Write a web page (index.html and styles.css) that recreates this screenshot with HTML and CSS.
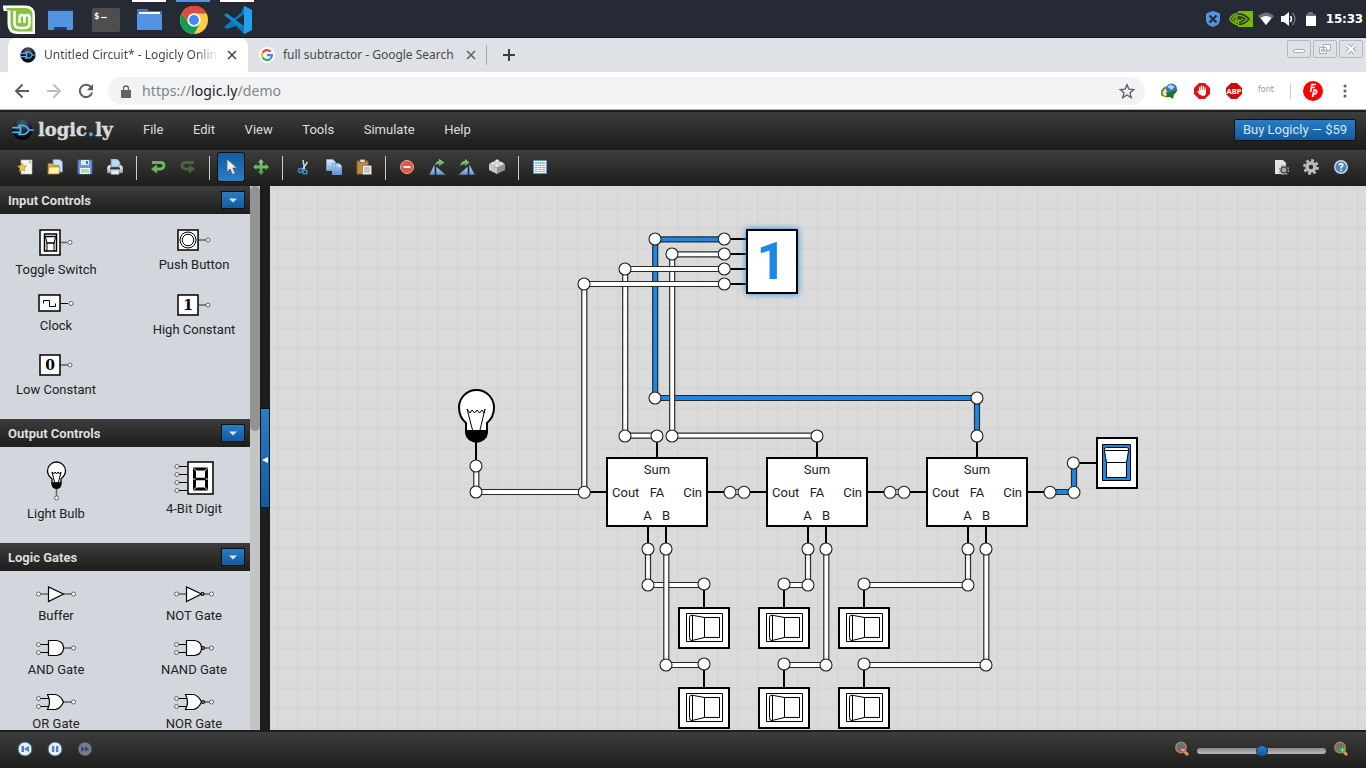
FILE: index.html
```html
<!DOCTYPE html>
<html lang="en">
<head>
<meta charset="utf-8">
<title>Untitled Circuit* - Logicly Online</title>
<link rel="stylesheet" href="styles.css">
</head>
<body>
<svg class="defs" width="0" height="0" aria-hidden="true">
  <defs>
    <linearGradient id="blue" x1="0" y1="0" x2="0" y2="1"><stop offset="0" stop-color="#dcecff"/><stop offset="1" stop-color="#5b8fd6"/></linearGradient>
    <linearGradient id="silver" x1="0" y1="0" x2="0" y2="1"><stop offset="0" stop-color="#f4f4f4"/><stop offset="1" stop-color="#aaa"/></linearGradient>
    <linearGradient id="green" x1="0" y1="0" x2="0" y2="1"><stop offset="0" stop-color="#a8dc98"/><stop offset="1" stop-color="#46943c"/></linearGradient>
    <radialGradient id="orb" cx=".5" cy=".2" r=".8"><stop offset="0" stop-color="#53606b"/><stop offset=".6" stop-color="#11161c"/><stop offset="1" stop-color="#000"/></radialGradient>
    <filter id="glow" x="-30%" y="-30%" width="160%" height="160%"><feGaussianBlur stdDeviation="3"/></filter>
    <symbol id="plug" viewBox="0 0 24 24">
      <circle cx="12" cy="12" r="11.2" fill="url(#orb)" stroke="#33414c" stroke-width=".7"/>
      <g fill="none" stroke="#55b4f5" stroke-width="1.7"><path d="M1.500 9.500h9.500M1.500 14.500h9.500M18 12h5.500M8.500 7.300h4q4.500 .6 6 4.700q-1.500 4.100-6 4.700h-4q3-4.700 0-9.400z"/></g>
    </symbol>
    <symbol id="google" viewBox="0 0 16 16">
      <circle cx="8" cy="8" r="8" fill="#fff"/>
      <g fill="none" stroke-width="2.200"><path d="M11.500 4.600A5 5 0 0 0 3.700 5.600" stroke="#ea4335"/><path d="M3.700 5.600A5 5 0 0 0 3.700 10.500" stroke="#fbbc05"/><path d="M3.700 10.500A5 5 0 0 0 11.300 11.800" stroke="#34a853"/><path d="M11.300 11.800A5 5 0 0 0 13 8.100H8" stroke="#4285f4"/></g>
    </symbol>
    <symbol id="adder" viewBox="0 0 102 70">
      <rect x="1" y="1" width="100" height="68" fill="#fff" stroke="#000" stroke-width="2"/>
      <g class="pin-label"><text x="51" y="17" text-anchor="middle">Sum</text><text x="6" y="40">Cout</text><text x="51" y="40" text-anchor="middle">FA</text><text x="96" y="40" text-anchor="end">Cin</text><text x="41.500" y="63" text-anchor="middle">A</text><text x="60" y="63" text-anchor="middle">B</text></g>
    </symbol>
    <symbol id="switch-off" viewBox="0 0 52 42">
      <rect x="1" y="1" width="50" height="40" fill="#fff" stroke="#000" stroke-width="2"/>
      <g fill="none" stroke="#000"><path d="M8.500 6.500h36v28h-36zM26.500 10.500h15v20h-15zM14.500 8.500v25"/><path d="M26.500 10.500L14 8.200Q11.500 8 11.500 10.500v20Q11.500 34 14 33.500l12.500-3"/></g>
    </symbol>
  </defs>
</svg>

<header class="taskbar">
  <div class="launchers">
    <span class="launcher mint"><svg width="33" height="30" viewBox="0 0 33 30"><path d="M0 .5h22q10 0 10 9.500v19H15Q4.500 29 4.500 19V6H1Q0 5 0 .5z" fill="#fff"/><path d="M3 3h19q7.500 0 7.500 7v16.500H15q-7.500 0-7.500-7.500V5.500H4z" fill="#86c440"/><path d="M11.500 6v12q0 5 5 5h5q5 0 5-5v-5q0-3-2.500-3t-2.500 3v5-5q0-3-2.500-3t-2.500 3v5" fill="none" stroke="#fff" stroke-width="2.500"/></svg></span>
    <span class="launcher"><svg width="26" height="24"><rect y="1" width="25" height="21" rx="1" fill="#5294e2"/><path d="M0 1h25v2H0z" fill="#213a5d"/><path d="M6 22v-2l1-1h11l1 1v2z" fill="#213a5d"/></svg></span>
    <span class="launcher"><svg width="28" height="24"><rect width="28" height="24" rx="1.500" fill="#4e4e4e"/><text x="2" y="10.500" class="prompt">$</text><path d="M9 9.500h6" stroke="#fff" stroke-width="1.200"/></svg></span>
    <span class="launcher open"><svg width="26" height="23"><path d="M0 2q0-1 1-1h9l2 2h12q1 0 1 1v18H0z" fill="#4179bd"/><path d="M2 4h21v3H2z" fill="#fff"/><path d="M0 6h25v15q0 1-1 1H1q-1 0-1-1z" fill="#5294e2"/></svg></span>
    <span class="launcher current"><svg width="28" height="28" viewBox="-14 -14 28 28"><circle r="14" fill="#ffcd40"/><path d="M-12.100-7A14 14 0 0 0 0 14L6 3-6 3z" fill="#109d58"/><path d="M0-6.500H12.600A14 14 0 0 0-12.100-7L-6 3z" fill="#dd4b3e"/><circle r="6.700" fill="#fff"/><circle r="5" fill="#4587f3"/></svg></span>
    <span class="launcher open"><svg width="28" height="28"><path d="M20 0l8 4v20l-8 4-8-8L3 23l-3-2 17-14z" fill="#0879be"/><path d="M2.500 7L0 9l15 12 5-3V20z" fill="#1189d1"/><path d="M20 0l8 4v20l-8 4z" fill="#25a0ec"/><path d="M20 8v12l-8-6z" fill="#252a35"/></svg></span>
  </div>
  <div class="tray">
    <svg width="16" height="18"><path d="M8 1l6 2q1 0 1 2v5q0 5-7 7-7-2-7-7V5q0-2 1-2z" fill="#5294e2"/><path d="M4.500 5.500l7 7m0-7l-7 7" stroke="#252a35" stroke-width="2"/></svg>
    <svg width="24" height="16"><path d="M9 0h15v16H9z" fill="#76b900"/><path d="M9 2.500Q3 3 .8 8q3 5 9 6M9 4.800Q5 5 3.600 8q2 3.500 6 3.600 4-.3 6-3.600-3-3-6.600-3.200M9.500 7q-3 0-3 1.500t3 1.500 3-2" fill="none" stroke="#76b900" stroke-width="1.500"/><path d="M9 3q7 0 11 5-4 5-10 5.500M9 5.700q4 0 7 2.300-3 3-6 3.500M9 7.500q3 0 3 1.500" fill="none" stroke="#252a35" stroke-width="1.400"/></svg>
    <svg width="16" height="16"><path d="M8 14L0 5q8-7 16 0z" fill="#6c7077"/><path d="M8 14L2.500 7q5.500-4 11 0z" fill="#fff"/></svg>
    <svg width="16" height="16"><path d="M0 5h3l5-4v14l-5-4H0z" fill="#fff"/><path d="M9.500 5q2 3 0 6" fill="none" stroke="#fff" stroke-width="1.500"/><path d="M11.500 2q5 6 0 12" fill="none" stroke="#747981" stroke-width="1.300"/></svg>
    <svg width="12" height="16"><path d="M3 1h5v2h3v3H1V3h2z" fill="#6c7077"/><path d="M1 5h10v10H1z" fill="#fff"/></svg>
    <span class="clock">15:33</span>
  </div>
</header>

<nav class="tabstrip">
  <div class="tab tab-active">
    <svg width="16" height="16"><use href="#plug"/></svg><span class="tab-title fade">Untitled Circuit* - Logicly Online</span>
    <svg class="close" width="10" height="10"><path d="M1 1l8 8m0-8l-8 8" stroke="#45494d" stroke-width="1.600"/></svg>
  </div>
  <div class="tab">
    <svg width="16" height="16"><use href="#google"/></svg><span class="tab-title">full subtractor - Google Search</span>
    <svg class="close" width="10" height="10"><path d="M1 1l8 8m0-8l-8 8" stroke="#5f6368" stroke-width="1.600"/></svg>
  </div>
  <i class="tab-divider"></i>
  <svg class="new-tab" width="12" height="12"><path d="M6 0v12M0 6h12" stroke="#3c4043" stroke-width="2"/></svg>
  <div class="window-buttons">
    <span><svg width="14" height="12"><rect x="1.500" y="6.500" width="11" height="3" rx="1.500" fill="#fff" stroke="#aaaeb3"/></svg></span>
    <span><svg width="14" height="12"><path d="M5.500 1.500h7v6h-7zM1.500 4.500h7v6h-7z" fill="#fff" stroke="#aaaeb3"/><path d="M3.500 6.500h3v2h-3z" fill="#dee1e6" stroke="#aaaeb3"/></svg></span>
    <span><svg width="14" height="12"><path d="M3 2l8 8m0-8l-8 8" stroke="#aaaeb3" stroke-width="4"/><path d="M3 2l8 8m0-8l-8 8" stroke="#fff" stroke-width="2"/></svg></span>
  </div>
</nav>

<div class="addressbar">
  <svg class="nav-icon" width="16" height="16"><path d="M15 8H2m6.500-6.500L2 8l6.500 6.500" fill="none" stroke="#5a5e63" stroke-width="2"/></svg>
  <svg class="nav-icon" width="16" height="16"><path d="M1 8h13M7.500 1.500L14 8l-6.500 6.500" fill="none" stroke="#bcbec0" stroke-width="2"/></svg>
  <svg class="nav-icon" width="16" height="16"><path d="M13 4.200A6.200 6.200 0 1 0 14 9.500" fill="none" stroke="#5a5e63" stroke-width="2"/><path d="M15 1v6.200H8.800z" fill="#5a5e63"/></svg>
  <div class="omnibox">
    <svg width="10" height="13"><path d="M0 5h10v7q0 1-1 1H1q-1 0-1-1z" fill="#5f6368"/><path d="M2.500 5V3.500a2.500 2.500 0 0 1 5 0V5" fill="none" stroke="#5f6368" stroke-width="1.300"/></svg>
    <span class="url">https://<b>logic.ly</b>/demo</span>
    <svg class="star" width="16" height="16"><path d="M8 1.700l1.900 4.500 4.800.4-3.700 3.200 1.200 4.700L8 12l-4.200 2.500L5 9.800 1.300 6.600l4.800-.4z" fill="none" stroke="#5f6368" stroke-width="1.400"/></svg>
  </div>
  <div class="extensions">
    <svg width="18" height="16"><ellipse cx="8" cy="8.500" rx="7" ry="4.500" transform="rotate(-25 8 8.500)" fill="none" stroke="#e8a21b" stroke-width="2"/><path d="M2 13Q-2 8 5 4" fill="none" stroke="#5c9c3b" stroke-width="2"/><circle cx="10.500" cy="6" r="5.500" fill="#3474b8"/><path d="M6.500 4q3-5 7 0l-3 3z" fill="#b7d4e6"/><path d="M4 9q4 2 8-1l5-1-4 4-1 5-3-2-5 0 2-2z" fill="#1e7420"/></svg>
    <svg width="16" height="16"><path d="M5 0h6l5 5v6l-5 5H5l-5-5V5z" fill="#e40f14"/><path d="M5.700 8V4.500m1.800 3V3.200m1.900 4.300V3.500m1.900 5V5M4 8.500l2 2.500" stroke="#fff" stroke-width="1.300" stroke-linecap="round"/><path d="M5 7h7v2q0 4-3 4-2.500 0-4-3z" fill="#fff"/></svg>
    <svg width="16" height="16"><path d="M5 0h6l5 5v6l-5 5H5l-5-5V5z" fill="#c70d0d"/><text x="8" y="10.800" text-anchor="middle" class="abp">ABP</text></svg>
    <span class="font-ext">font</span>
    <i></i>
    <svg width="20" height="20"><circle cx="10" cy="10" r="10" fill="#f00"/><path d="M13 3.500H9L7.500 11M7.500 6.500H12M9.500 16l1.500-7h2q1.500 2-.5 4h-2" fill="none" stroke="#fff" stroke-width="1.700"/></svg>
    <svg width="4" height="14" fill="#5f6368"><circle cx="2" cy="2" r="1.600"/><circle cx="2" cy="7" r="1.600"/><circle cx="2" cy="12" r="1.600"/></svg>
  </div>
</div>

<div class="menubar">
  <svg class="logo" width="104" height="28"><svg x="0" y="2.500" width="23" height="23"><use href="#plug"/></svg><text x="27" y="20" textLength="49" lengthAdjust="spacingAndGlyphs">logic</text><text x="77" y="20" textLength="6" lengthAdjust="spacingAndGlyphs" class="logo-dot">.</text><text x="84" y="20" textLength="18" lengthAdjust="spacingAndGlyphs">ly</text></svg>
  <ul class="menu"><li>File</li><li>Edit</li><li>View</li><li>Tools</li><li>Simulate</li><li>Help</li></ul>
  <button class="buy">Buy Logicly — $59</button>
</div>

<div class="toolbar">
  <span><svg width="16" height="16"><path d="M4 1h11v14H4z" fill="#f5f5ee" stroke="#bbb" stroke-width=".6"/><path d="M12 1l3 3h-3z" fill="#aaa"/><path d="M5 4l1.300 2.800 3.200.3-2.400 2.100.8 3.200L5 10.700l-2.800 1.700.8-3.200L.5 7.100l3.200-.3z" fill="#f5c842" stroke="#b88420" stroke-width=".6"/></svg></span>
  <span><svg width="16" height="16"><path d="M6 .5h7l2.500 2.500v10H6z" fill="#cfe2fa" stroke="#5888c9"/><path d="M1 4.500h5l1 2h5v8H1z" fill="#e7b03c" stroke="#a86e18" stroke-width=".7"/><path d="M2 8h11l-1 7H1z" fill="#fff0b8" stroke="#b67b22" stroke-width=".7"/></svg></span>
  <span><svg width="16" height="16"><path d="M1 1h14v14H1z" fill="#6c98db" stroke="#3d65b0"/><path d="M4 1h8v5H4z" fill="#dce9fb"/><path d="M9 2h2v3H9z" fill="#4772b9"/><path d="M3 9h10v6H3z" fill="#f6fbf1"/><path d="M4 11h8m-8 2h8" stroke="#7cb65f"/></svg></span>
  <span><svg width="16" height="16"><path d="M4 0h6l3 3v5H4z" fill="#b9d7fa" stroke="#6289bc" stroke-width=".7"/><path d="M2 6h2v3h8V6h2l2 2v5q0 1-1 1H1q-1 0-1-1V8z" fill="url(#silver)" stroke="#777" stroke-width=".5"/><path d="M3 9.500h10" stroke="#333" stroke-width="1.600"/><path d="M4 11h8v4.500H4z" fill="#e3eefb" stroke="#7b8798" stroke-width=".5"/></svg></span>
  <b></b>
  <span><svg width="16" height="16"><path d="M2 3.500h8.500q3.500 0 3.500 3t-3.500 3.500H6" fill="none" stroke="#6bb85c" stroke-width="2.800"/><path d="M7 5.500v9L1 10z" fill="#6bb85c"/></svg></span>
  <span><svg class="disabled" width="16" height="16"><path d="M14 3.500H5.500q-3.500 0-3.500 3T5.500 10H10" fill="none" stroke="#6bb85c" stroke-width="2.800"/><path d="M9 5.500v9l6-4.500z" fill="#6bb85c"/></svg></span>
  <b></b>
  <span class="pressed"><svg width="16" height="18"><path d="M4 1v13l3.200-3 2.300 5.500 2.700-1.200L9.800 10H14z" fill="#e9edf1" stroke="#536577" stroke-width=".8"/></svg></span>
  <span><svg width="16" height="16"><path d="M8 0l3 3.500H9.400v3.100h3.100V5L16 8l-3.500 3V9.400H9.400v3.100H11L8 16l-3-3.500h1.600V9.400H3.500V11L0 8l3.500-3v1.600h3.100V3.500H5z" fill="url(#green)" stroke="#3d7e37" stroke-width=".5"/></svg></span>
  <b></b>
  <span><svg width="16" height="16"><path d="M7 1l1.500 9M11.500 3L6 11" stroke="#c5dbef" stroke-width="1.500"/><circle cx="4.500" cy="11.500" r="2" fill="none" stroke="#438bd0" stroke-width="1.500"/><circle cx="9" cy="13" r="2" fill="none" stroke="#438bd0" stroke-width="1.500"/></svg></span>
  <span><svg width="16" height="16"><g fill="url(#blue)" stroke="#7ca4dc" stroke-width=".8"><path d="M.5.500H7L9.500 3v8.500h-9zM6.500 4.500H13L15.500 7v8.500h-9z"/></g><path d="M12.500 4.500V7.500h3" fill="#eef6ff"/></svg></span>
  <span><svg width="16" height="16"><path d="M1 2h11v13H1z" fill="#c28a3c" stroke="#8c5c20"/><path d="M4 .5h5v3H4z" fill="#ddd" stroke="#896831" stroke-width=".7"/><path d="M6.500 6.500h9v9h-9z" fill="#f4f4f4" stroke="#777" stroke-width=".7"/><path d="M8 9h6m-6 2h6m-6 2h6" stroke="#999"/></svg></span>
  <b></b>
  <span><svg width="16" height="16"><circle cx="8" cy="8" r="6.500" fill="#df594e" stroke="#f2aaa1"/><path d="M4.500 8h7" stroke="#fff" stroke-width="2"/></svg></span>
  <span><svg width="16" height="16"><path d="M5.500 6v9.500H.5zM7.500 8l8.500 7.500H7.500z" fill="url(#blue)" stroke="#6b8fc7" stroke-width=".5"/><path d="M6 6q1-4 4-4V0l5.500 3.500L10 7.500V5.500Q8 5 6 6z" fill="url(#green)"/></svg></span>
  <span><svg width="16" height="16"><path d="M10.500 6v9.500h5zM8.500 8L0 15.500h8.500z" fill="url(#blue)" stroke="#6b8fc7" stroke-width=".5"/><path d="M1 7q1-5 5-5V0l4.500 3.500L6 7.500V5.500Q3 5 1 7z" fill="url(#green)"/></svg></span>
  <span><svg width="16" height="16"><path d="M8 1l8 4-8 4-8-4z" fill="#eee"/><path d="M0 5l8 4v6l-8-4z" fill="#c9c9c9"/><path d="M16 5L8 9v6l8-4z" fill="#929292"/><g fill="#f8f8f8" stroke="#999" stroke-width=".6"><ellipse cx="8" cy="2" rx="2" ry="1.500"/><ellipse cx="4" cy="4.500" rx="2" ry="1.500"/><ellipse cx="12" cy="4.500" rx="2" ry="1.500"/><ellipse cx="8" cy="6.500" rx="2" ry="1.500"/></g></svg></span>
  <b></b>
  <span><svg width="14" height="14"><path d="M.5.500h13v13H.5z" fill="#edf4fd" stroke="#5d92d0"/><path d="M2 3h10" stroke="#80b65d" stroke-width="1.200"/><path d="M2 5.500h10m-10 2h10m-10 2h10m-10 2h10" stroke="#9aabc3" stroke-width="1.100"/><path d="M5 5v7m3.500-7v7" stroke="#edf4fd"/></svg></span>
  <div class="toolbar-end">
    <span><svg width="16" height="16"><path d="M2 1h8l3 3v11H2z" fill="#e2e2df"/><circle cx="11" cy="11" r="3" fill="#aaa" stroke="#494949" stroke-width="1.400"/><circle cx="11" cy="11" r="4.600" fill="none" stroke="#999" stroke-width="1.500" stroke-dasharray="2 1.600"/></svg></span>
    <span><svg width="16" height="16"><circle cx="8" cy="8" r="4" fill="none" stroke="#bbb" stroke-width="3.500"/><circle cx="8" cy="8" r="6.600" fill="none" stroke="#bbb" stroke-width="2.600" stroke-dasharray="2.800 2.380"/></svg></span>
    <span><svg width="16" height="16"><circle cx="8" cy="8" r="6.200" fill="#5382bf" stroke="#c4d6ec" stroke-width="1.500"/><text x="8" y="12" text-anchor="middle" class="help">?</text></svg></span>
  </div>
</div>

<main class="workspace">
  <aside class="palette">
    <h2>Input Controls<button><svg width="8" height="5"><path d="M0 .5h8L4 4.500z"/></svg></button></h2>
    <div class="parts">
      <figure><svg width="40" height="27"><rect x="4" y="1" width="20" height="25" class="box"/><path d="M8.500 5h12v17h-12z" class="line bold"/><path d="M8.500 7.500h12M10.500 14h8" class="line bold"/><path d="M9.500 8l1.500 6v8m8.500-14l-1.500 6v8" class="line"/><path d="M25 13.500h6" class="lead"/><circle cx="34" cy="13.500" r="2" class="pin"/></svg><figcaption>Toggle Switch</figcaption></figure>
      <figure><svg width="40" height="22"><rect x="4" y="1" width="20" height="20" class="box"/><circle cx="14" cy="11" r="8" class="line"/><circle cx="14" cy="11" r="5.800" class="line"/><path d="M25 11h7" class="lead"/><circle cx="34" cy="11" r="2" class="pin"/></svg><figcaption>Push Button</figcaption></figure>
      <figure><svg width="40" height="18"><rect x="3" y="1" width="21" height="16" class="box"/><path d="M7.500 9.500v-3h6v6h6v-3" class="line"/><path d="M25 9.500h7" class="lead dark"/><circle cx="35" cy="9.500" r="2" class="pin"/></svg><figcaption>Clock</figcaption></figure>
      <figure><svg width="40" height="22"><rect x="4" y="1" width="20" height="20" class="box"/><text x="14" y="16" text-anchor="middle" class="constant">1</text><path d="M25 11h7" class="lead"/><circle cx="34" cy="11" r="2" class="pin"/></svg><figcaption>High Constant</figcaption></figure>
      <figure><svg width="40" height="22"><rect x="4" y="1" width="20" height="20" class="box"/><text x="14" y="16" text-anchor="middle" class="constant">0</text><path d="M25 11h7" class="lead"/><circle cx="34" cy="11" r="2" class="pin"/></svg><figcaption>Low Constant</figcaption></figure>
    </div>
    <h2>Output Controls<button><svg width="8" height="5"><path d="M0 .5h8L4 4.500z"/></svg></button></h2>
    <div class="parts">
      <figure><svg width="20" height="38"><path d="M10.500 26v8" class="lead"/><path d="M6 21v-4Q1.500 13 1.500 9a9 9 0 0 1 18 0q0 4-4.500 8v4z" fill="#fff" stroke="#000" stroke-width="1.300"/><path d="M5.500 20.500h10v2.500q-1 4-5 4t-5-4z"/><path d="M6 10l2.500 10m6.500-10l-2.500 10M6 10l1.500 2 1.500-2 1.500 2 1.500-2 1.500 2 1.500-2" class="line"/><circle cx="10.500" cy="36" r="2" class="pin"/></svg><figcaption>Light Bulb</figcaption></figure>
      <figure class="digit-part"><svg width="40" height="33"><path d="M3 4.500h12M3 12.500h12M3 20.500h12M3 28.500h12" class="lead dark"/><rect x="14" y="0" width="25" height="32" class="box"/><path d="M20.500 7h12v20h-12z" fill="none" stroke="#000" stroke-width="3"/><path d="M20.500 17h12" stroke="#000" stroke-width="2.500"/><path d="M19 5.500l3.500 3.500m8 0L34 5.500M19 28.500l3.500-3.500m8 0l3.500 3.500M18.500 17h3m10 0h3" stroke="#fff" stroke-width=".9"/><circle cx="3" cy="4.500" r="2" class="pin"/><circle cx="3" cy="12.500" r="2" class="pin"/><circle cx="3" cy="20.500" r="2" class="pin"/><circle cx="3" cy="28.500" r="2" class="pin"/></svg><figcaption>4-Bit Digit</figcaption></figure>
    </div>
    <h2>Logic Gates<button><svg width="8" height="5"><path d="M0 .5h8L4 4.500z"/></svg></button></h2>
    <div class="parts">
      <figure><svg width="40" height="16"><path d="M3 8h33" class="lead"/><path d="M12.500 1v14.500L27.500 8z" class="gate"/><circle cx="2.500" cy="8" r="2" class="pin"/><circle cx="37.500" cy="8" r="2" class="pin"/></svg><figcaption>Buffer</figcaption></figure>
      <figure><svg width="40" height="16"><path d="M3 8h33" class="lead"/><path d="M12.500 1v14.500L27.500 8z" class="gate"/><circle cx="28.500" cy="8" r="1.400" class="gate"/><circle cx="2.500" cy="8" r="2" class="pin"/><circle cx="37.500" cy="8" r="2" class="pin"/></svg><figcaption>NOT Gate</figcaption></figure>
      <figure><svg width="40" height="16"><path d="M3 4.500h9M3 12.500h9" class="lead dark"/><path d="M26 8h10" class="lead"/><path d="M12.500.5h8q7 1 7 7.500t-7 7.500h-8z" class="gate"/><circle cx="2.500" cy="4.500" r="2" class="pin"/><circle cx="2.500" cy="12.500" r="2" class="pin"/><circle cx="37.500" cy="8" r="2" class="pin"/></svg><figcaption>AND Gate</figcaption></figure>
      <figure><svg width="40" height="16"><path d="M3 4.500h9M3 12.500h9" class="lead dark"/><path d="M26 8h10" class="lead"/><path d="M12.500.5h8q7 1 7 7.500t-7 7.500h-8z" class="gate"/><circle cx="29" cy="8" r="1.400" class="gate"/><circle cx="2.500" cy="4.500" r="2" class="pin"/><circle cx="2.500" cy="12.500" r="2" class="pin"/><circle cx="37.500" cy="8" r="2" class="pin"/></svg><figcaption>NAND Gate</figcaption></figure>
      <figure><svg width="40" height="16"><path d="M3 4.500h10M3 12.500h10" class="lead dark"/><path d="M26 8h10" class="lead"/><path d="M11.500.5h8q5 1 8 7.500-3 6.500-8 7.500h-8q4-7.500 0-15z" class="gate"/><circle cx="2.500" cy="4.500" r="2" class="pin"/><circle cx="2.500" cy="12.500" r="2" class="pin"/><circle cx="37.500" cy="8" r="2" class="pin"/></svg><figcaption>OR Gate</figcaption></figure>
      <figure><svg width="40" height="16"><path d="M3 4.500h10M3 12.500h10" class="lead dark"/><path d="M26 8h10" class="lead"/><path d="M11.500.5h8q5 1 8 7.500-3 6.500-8 7.500h-8q4-7.500 0-15z" class="gate"/><circle cx="29" cy="8" r="1.400" class="gate"/><circle cx="2.500" cy="4.500" r="2" class="pin"/><circle cx="2.500" cy="12.500" r="2" class="pin"/><circle cx="37.500" cy="8" r="2" class="pin"/></svg><figcaption>NOR Gate</figcaption></figure>
    </div>
  </aside>
  <div class="scrollbar"><div class="thumb"></div></div>
  <div class="splitter"><div class="handle"><svg width="6" height="6"><path d="M6 0v6L0 3z" fill="#fff"/></svg></div></div>
  <svg class="canvas" width="1096" height="544" viewBox="270 186 1096 544">
    <defs><pattern id="grid" x="277" y="187.500" width="20" height="20" patternUnits="userSpaceOnUse"><path d="M.7 0v20M0 .7h20" stroke="#d3d3d3" stroke-width="1.400"/></pattern></defs>
    <rect x="270" y="186" width="1096" height="544" fill="#dbdbdb"/>
    <rect x="270" y="186" width="1096" height="544" fill="url(#grid)"/>
    <path class="stub" d="M476 440v22M585 492h23M657 436v23M817 436v23M977 436v23M707 492h60M867 492h60M1027 492h20M1076 463h22M648 526v22M666 526v22M808 526v22M826 526v22M968 526v22M986 526v22M704 584v25M784 584v25M864 584v25M704 664v25M784 664v25M864 664v25M726 239h22M726 254h22M726 269h22M726 284h22"/>
    <rect x="746" y="229" width="52" height="65" fill="#1b87e6" filter="url(#glow)"/>
    <rect x="747" y="230" width="50" height="63" fill="#fff" stroke="#000" stroke-width="2"/>
    <text x="771.500" y="279" text-anchor="middle" class="digit">1</text>

    <path class="wire" d="M724 239.300H655.200V398H977V436"/><path class="core on" d="M724 239.300H655.200V398H977V436"/>
    <path class="wire" d="M724 254.300H672.200V435.700H817"/><path class="core" d="M724 254.300H672.200V435.700H817"/>
    <path class="wire" d="M724 269H625.200V435.700H657"/><path class="core" d="M724 269H625.200V435.700H657"/>
    <path class="wire" d="M724 284H584.300V492"/><path class="core" d="M724 284H584.300V492"/>
    <path class="wire" d="M476.300 466V492H584"/><path class="core" d="M476.300 466V492H584"/>
    <path class="wire" d="M730 492h14M890 492h14"/><path class="core" d="M730 492h14M890 492h14"/>
    <path class="wire" d="M1050 492h24V463"/><path class="core on" d="M1050 492h24V463"/>
    <path class="wire" d="M648 549v36h56M808 549v36h-24M968 549v36H864"/><path class="core" d="M648 549v36h56M808 549v36h-24M968 549v36H864"/>
    <path class="wire" d="M666.300 549v116H704M826.300 549v116H784M986.300 549v116H864"/><path class="core" d="M666.300 549v116H704M826.300 549v116H784M986.300 549v116H864"/>

    <g class="nodes">
      <circle cx="655" cy="239" r="6"/><circle cx="724.300" cy="239" r="6"/><circle cx="672" cy="254" r="6"/><circle cx="724.300" cy="254" r="6"/><circle cx="625" cy="269" r="6"/><circle cx="724.300" cy="269" r="6"/><circle cx="584" cy="284" r="6"/><circle cx="724.300" cy="284" r="6"/>
      <circle cx="655" cy="398" r="6"/><circle cx="977" cy="398" r="6"/><circle cx="977" cy="436" r="6"/><circle cx="672" cy="436" r="6"/><circle cx="817" cy="436" r="6"/><circle cx="625" cy="436" r="6"/><circle cx="657" cy="436" r="6"/>
      <circle cx="476" cy="466" r="6"/><circle cx="476" cy="492" r="6"/><circle cx="584.300" cy="492.300" r="6"/><circle cx="730" cy="492.300" r="6"/><circle cx="744" cy="492.300" r="6"/><circle cx="890" cy="492.300" r="6"/><circle cx="904" cy="492.300" r="6"/><circle cx="1050" cy="492.300" r="6"/><circle cx="1074" cy="492.300" r="6"/><circle cx="1073.300" cy="463" r="6"/>
      <circle cx="648" cy="549" r="6"/><circle cx="666" cy="549" r="6"/><circle cx="808" cy="549" r="6"/><circle cx="826" cy="549" r="6"/><circle cx="968" cy="549" r="6"/><circle cx="986" cy="549" r="6"/>
      <circle cx="648" cy="585" r="6"/><circle cx="704" cy="584" r="6"/><circle cx="808" cy="585" r="6"/><circle cx="784" cy="584" r="6"/><circle cx="968" cy="585" r="6"/><circle cx="864" cy="584" r="6"/>
      <circle cx="666" cy="665" r="6"/><circle cx="704" cy="664" r="6"/><circle cx="826" cy="665" r="6"/><circle cx="784" cy="664" r="6"/><circle cx="986" cy="665" r="6"/><circle cx="864" cy="664" r="6"/>
    </g>

    <g transform="translate(458 389)"><path d="M8 43V34Q1 28 1 18.500a17.500 17.500 0 0 1 35 0Q36 28 29 34v9z" fill="#fff" stroke="#000" stroke-width="2"/><path d="M7 41h23v3q-1 8-11.500 10Q8 52 7 44z"/><path d="M9 20l5.500 21M27 20l-5 21M9 20l3 4 2-3 2.500 3 2.500-3 2.500 3 2.500-3 2 3L27 20" fill="none" stroke="#000"/></g>
    <use href="#adder" x="606" y="457" width="102" height="70"/><use href="#adder" x="766" y="457" width="102" height="70"/><use href="#adder" x="926" y="457" width="102" height="70"/>
    <g transform="translate(1096 437)"><path d="M1 1h40v50H1z" fill="#fff" stroke="#000" stroke-width="2"/><path d="M6.500 7.500h28v36h-28z" fill="#1b87e6" stroke="#000"/><path d="M10.500 25.500L8.300 13Q8 10.500 10.500 10.500h20Q33 10.500 32.700 13L30.500 25.500v15h-20zM10.500 25.500h20M8 13.500h25" fill="#fff" stroke="#000"/></g>
    <use href="#switch-off" x="678" y="607" width="52" height="42"/><use href="#switch-off" x="758" y="607" width="52" height="42"/><use href="#switch-off" x="838" y="607" width="52" height="42"/>
    <use href="#switch-off" x="678" y="687" width="52" height="42"/><use href="#switch-off" x="758" y="687" width="52" height="42"/><use href="#switch-off" x="838" y="687" width="52" height="42"/>
  </svg>
</main>

<footer class="simbar">
  <div class="playback">
    <svg width="16" height="16"><circle cx="8" cy="8" r="7" fill="#e9eef5" stroke="#2f5f9b"/><path d="M4.500 5H7v6H4.500zM12 5v6L7 8z" fill="#4a80c7"/></svg>
    <svg width="16" height="16"><circle cx="8" cy="8" r="7" fill="#e9eef5" stroke="#2f5f9b"/><path d="M5 5h2.300v6H5zM9 5h2.300v6H9z" fill="#4a80c7"/></svg>
    <svg width="16" height="16"><circle cx="8" cy="8" r="7" fill="#7a7d81" stroke="#2c4058"/><path d="M4 5l4 3-4 3zM8 5l4 3-4 3z" fill="#304f78"/></svg>
  </div>
  <div class="zoom">
    <svg width="16" height="16"><path d="M10 10l4 4" stroke="#dc9a55" stroke-width="3"/><circle cx="7" cy="6.500" r="5.200" fill="#68727b" stroke="#ad8650" stroke-width="1.500"/><path d="M6 9h6" stroke="#e03a3a" stroke-width="2.600"/><path d="M7 9h4" stroke="#fff"/></svg>
    <div class="slider"><div class="knob"></div></div>
    <svg width="16" height="16"><path d="M10 10l4 4" stroke="#dc9a55" stroke-width="3"/><circle cx="7" cy="6.500" r="5.200" fill="#68727b" stroke="#ad8650" stroke-width="1.500"/><path d="M9.500 5.500v7M6 9h7" stroke="#3d9c38" stroke-width="2.600"/><path d="M9.500 6.500v5M7 9h5" stroke="#a5e69b" stroke-width=".8"/></svg>
  </div>
</footer>
</body>
</html>
```
FILE: styles.css
```css
* { box-sizing: border-box; }
body { margin: 0; width: 1366px; height: 768px; overflow: hidden; display: flex; flex-direction: column; background: #1d1d1b; font: 13px/15px Roboto, sans-serif; }
svg { display: block; flex: none; }
button { border: 0; padding: 0; font: inherit; }
.defs { position: absolute; }

.taskbar { flex: none; height: 38px; display: flex; justify-content: space-between; background: #252a35; border-bottom: 1px solid #11141a; }
.launchers { display: flex; gap: 10px; padding-left: 3px; }
.launcher { width: 34px; height: 37px; padding-left: 1px; display: flex; align-items: center; justify-content: center; border-top: 2px solid transparent; }
.launcher.mint { width: 33px; padding: 0; margin-right: -1px; }
.launcher.mint + .launcher { margin-left: -2px; margin-right: 1px; }
.launcher.open { border-color: #fff; }
.launcher.current { border-color: #5294e2; }
.prompt { font: bold 9px "DejaVu Sans Mono", monospace; fill: #fff; }
.tray { display: flex; align-items: center; gap: 8px; padding-right: 3px; }
.tray svg:nth-child(-n+2) { transform: translateX(2px); }
.tray svg:nth-child(3) { margin-right: -1px; margin-left: -1px; }
.clock { margin-left: 1px; font: bold 12px/16px "DejaVu Sans", sans-serif; color: #fff; letter-spacing: -.2px; }

.tabstrip { flex: none; height: 34px; padding-left: 8px; display: flex; align-items: center; background: #dee1e6; font: 12px/16px "Noto Sans", sans-serif; color: #45494d; }
.tab { width: 238px; height: 34px; padding: 0 10px 0 11px; display: flex; align-items: center; border-radius: 8px 8px 0 0; letter-spacing: -.02px; }
.tab-active { width: 240px; padding: 0 11px 0 12px; background: #fff; }
.tab-title { margin-left: 8px; flex: 1; white-space: nowrap; overflow: hidden; }
.tab-title.fade { margin-right: 8px; -webkit-mask-image: linear-gradient(90deg, #000 86%, transparent); mask-image: linear-gradient(90deg, #000 86%, transparent); }
.tab-divider { width: 1px; height: 20px; background: #a5a9ae; }
.new-tab { margin-left: 16px; }
.window-buttons { margin-left: auto; margin-right: 3px; align-self: flex-start; padding-top: 2px; display: flex; gap: 2px; }
.window-buttons span { width: 24px; height: 18px; border: 1px solid #b4b7bb; border-radius: 2px; display: grid; place-items: center; }

.addressbar { flex: none; height: 38px; padding: 1px 19px 0 14px; display: flex; align-items: center; background: #fff; border-bottom: 1px solid #b5b5b5; }
.nav-icon { margin-right: 16px; }
.omnibox { width: 1037px; height: 28px; margin-left: -2px; padding: 0 10px 0 13px; display: flex; align-items: center; border-radius: 14px; background: #f1f3f4; }
.url { margin-left: 11px; font: 14px/20px "Noto Sans", sans-serif; letter-spacing: .1px; color: #80868b; }
.url b { font-weight: normal; color: #202124; }
.star { margin-left: auto; }
.extensions { flex: 1; display: flex; align-items: center; margin-left: 16px; }
.extensions svg + svg { margin-left: 15px; }
.extensions svg:nth-child(3) { margin-left: 16px; }
.abp { font: bold 7.5px "Noto Sans", sans-serif; fill: #fff; }
.font-ext { margin: -2px 0 0 16px; font: 8px/12px "DejaVu Sans", sans-serif; color: #999; }
.extensions i { width: 1px; height: 16px; margin: 0 12px 0 16px; background: #ccc; }
.extensions svg:last-child { margin-left: auto; }

.menubar, .toolbar, .palette h2, .simbar { background: linear-gradient(#3d3d3d, #1d1d1b); }
.menubar { flex: none; height: 35px; margin-top: 2px; padding: 0 10px 0 11px; display: flex; align-items: center; }
.logo text { font: bold 19px "DejaVu Serif", serif; fill: #dadada; stroke: #dadada; stroke-width: .4px; }
.logo .logo-dot { fill: #4aa8ee; stroke: #4aa8ee; }
.menu { margin: 0 0 0 28px; padding: 0; display: flex; gap: 29.6px; list-style: none; color: #ddd; }
.buy { width: 122px; height: 22px; margin-left: auto; border: 1px solid #111; border-radius: 2px; background: linear-gradient(#2a7dc4, #0f5ba0); color: #dbe6f1; }

.toolbar { flex: none; height: 36px; margin-top: 3px; padding: 0 10px 2px; display: flex; align-items: center; }
.toolbar span { width: 30px; height: 30px; display: grid; place-items: center; }
.toolbar b { width: 1px; height: 24px; margin: 2px 6px 0; background: #ccc; }
.toolbar .pressed { width: 28px; margin: 0 1px; border: 1px solid #111; border-radius: 3px; background: linear-gradient(#105c9f, #2a7dc4); }
.toolbar .disabled { opacity: .4; }
.toolbar-end { display: flex; margin-left: auto; }
.help { font: bold 11px Roboto, sans-serif; fill: #fff; }

.workspace { flex: none; height: 544px; display: flex; }
.palette { width: 250px; height: 544px; overflow: hidden; background: #d2d6dd; color: #222; }
.palette h2 { margin: 0; height: 28px; padding: 1px 5px 0 8px; display: flex; align-items: center; justify-content: space-between; font: bold 13px/17px Roboto, sans-serif; color: #ddd; }
.palette button { width: 24px; height: 18px; margin-top: -1px; display: grid; place-items: center; border: 1px solid #111; background: linear-gradient(#2a7dc4, #0f5ba0); fill: #dce4ed; }
.parts { display: grid; grid-template-columns: 112px 112px; column-gap: 26px; row-gap: 17px; padding: 15px 0 22px; }
figure { margin: 0; display: flex; flex-direction: column; align-items: center; }
figure svg { overflow: visible; }
figcaption { margin-top: 6px; white-space: nowrap; }
.box { fill: #fff; stroke: #000; stroke-width: 1.5; }
.gate { fill: #fff; stroke: #000; stroke-width: 1.2; }
.line { fill: none; stroke: #000; stroke-width: 1; }
.line.bold { stroke-width: 1.5; }
.lead { fill: none; stroke: #666; stroke-width: 1.6; }
.lead.dark { stroke: #000; stroke-width: 1; }
.pin { fill: #fff; stroke: #444; stroke-width: .8; }
.constant { font: bold 14px "DejaVu Serif", serif; }
.scrollbar { width: 10px; background: #c4c4c4; }
.thumb { height: 245px; border-radius: 5px; background: #939393; }
.splitter { width: 10px; display: flex; align-items: center; background: #1d1d1b; }
.handle { width: 10px; height: 100px; padding-top: 3px; display: grid; place-items: center; border: 1px solid #111; background: linear-gradient(#2a7dc4, #0f5ba0); }

.pin-label { font: 13px Roboto, sans-serif; fill: #222; }
.stub { fill: none; stroke: #000; stroke-width: 2; }
.wire { fill: none; stroke: #2a2a2a; stroke-width: 6.2; }
.core { fill: none; stroke: #fff; stroke-width: 3.8; }
.core.on { stroke: #1b87e6; }
.nodes { fill: #fff; stroke: #222; stroke-width: 1.1; }
.digit { font: bold 52px Roboto, sans-serif; fill: #1b87e6; }

.simbar { flex: none; height: 38px; padding: 0 17px 2px; border-top: 2px solid #1d1d1b; display: flex; align-items: center; justify-content: space-between; }
.playback { display: flex; gap: 14px; }
.zoom { display: flex; align-items: center; gap: 7px; }
.slider { width: 129px; height: 6px; margin-top: 4px; display: flex; align-items: center; justify-content: center; border-radius: 3px; background: linear-gradient(#8a8a8a, #b9b9b9); }
.knob { flex: none; width: 12px; height: 12px; border: 1px solid #173652; border-radius: 50%; background: linear-gradient(#2a7dc4, #0f5ba0); }
```
